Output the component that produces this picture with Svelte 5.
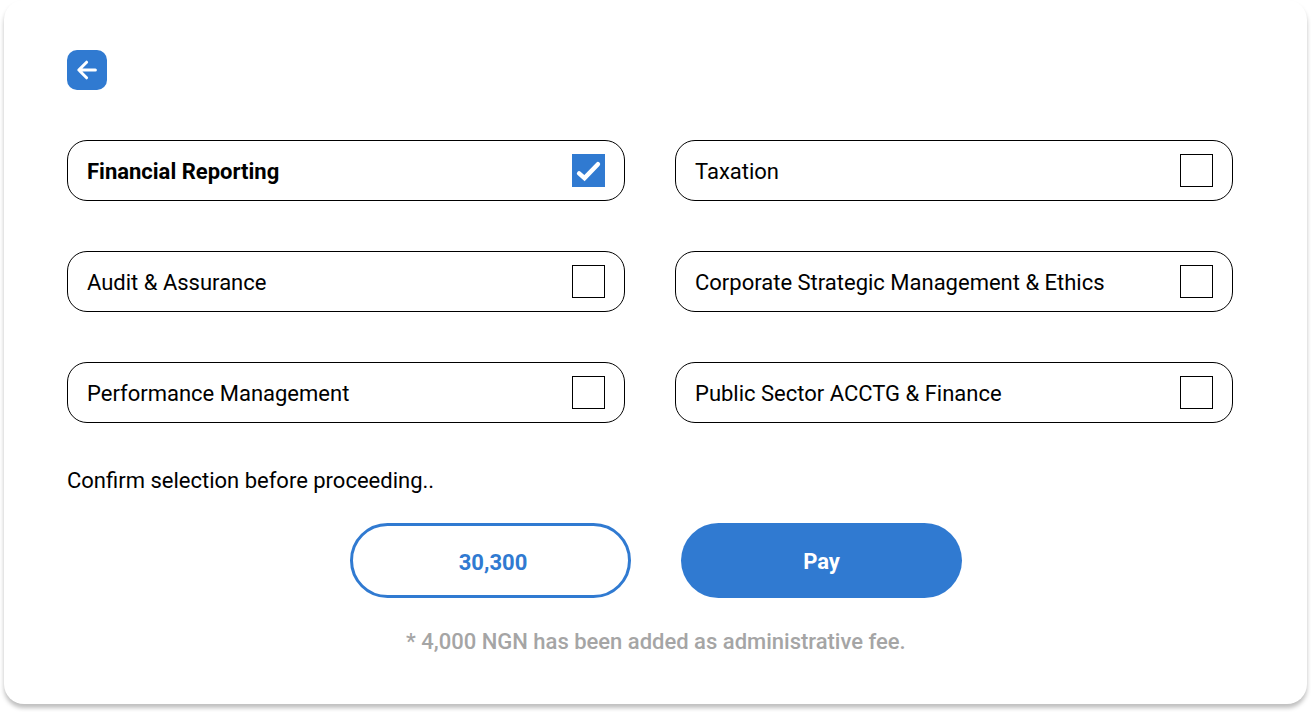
<script>
  const subjects = [
    { name: 'Financial Reporting', checked: true },
    { name: 'Taxation', checked: false },
    { name: 'Audit & Assurance', checked: false },
    { name: 'Corporate Strategic Management & Ethics', checked: false },
    { name: 'Performance Management', checked: false },
    { name: 'Public Sector ACCTG & Finance', checked: false }
  ];
</script>

<main class="page">
  <section class="card">
    <button class="back" aria-label="Back">
      <svg width="40" height="40" viewBox="0 0 40 40" fill="none" stroke="#fff" stroke-width="3" stroke-linecap="round" stroke-linejoin="round">
        <path d="M28.4 20H12M19.6 12.2L11.8 20L19.6 27.8" />
      </svg>
    </button>

    <div class="grid">
      {#each subjects as s}
        <div class="subject" class:selected={s.checked}>
          <span class="name">{s.name}</span>
          <span class="box">
            {#if s.checked}
              <svg width="33" height="33" viewBox="0 0 33 33" fill="none" stroke="#fff" stroke-width="4.5" stroke-linecap="round">
                <path d="M7.1 19.4L12.5 24.1L25.9 10.2" />
              </svg>
            {/if}
          </span>
        </div>
      {/each}
    </div>

    <p class="confirm">Confirm selection before proceeding..</p>
    <div class="actions">
      <div class="amount">30,300</div>
      <button class="pay">Pay</button>
    </div>
    <p class="fee">* 4,000 NGN has been added as administrative fee.</p>
  </section>
</main>

<style>
  :global(body) { margin: 0; background: #fff; }
  .page {
    box-sizing: border-box;
    height: 712px;
    padding: 0 4px;
    overflow: hidden;
  }
  .card {
    box-sizing: border-box;
    height: 704px;
    padding: 50px 74px 0 63px;
    border-radius: 20px;
    background: #fff;
    box-shadow: 0 4px 4px rgba(0, 0, 0, 0.25);
    font-family: Roboto, sans-serif;
    font-size: 22px;
    line-height: 26px;
    color: #000;
  }
  button { border: 0; padding: 0; font: inherit; }
  .back {
    display: block;
    width: 40px;
    height: 40px;
    border-radius: 10px;
    background: #307ad1;
  }
  .back svg { display: block; }
  .grid {
    display: grid;
    grid-template-columns: 558px 558px;
    gap: 50px;
    margin-top: 50px;
  }
  .subject {
    box-sizing: border-box;
    height: 61px;
    padding: 0 19px;
    border: 1px solid #000;
    border-radius: 20px;
    display: flex;
    align-items: center;
    justify-content: space-between;
  }
  .name { padding-top: 2px; }
  .selected { font-weight: 700; }
  .box {
    box-sizing: border-box;
    width: 33px;
    height: 33px;
    border: 1px solid #000;
  }
  .selected .box { border: 0; background: #307ad1; }
  .box svg { display: block; }
  p { margin: 0; }
  .confirm { margin-top: 45px; }
  .actions {
    display: flex;
    gap: 50px;
    margin: 29px 0 0 283px;
  }
  .amount, .pay {
    box-sizing: border-box;
    width: 281px;
    height: 75px;
    border-radius: 38px;
    display: flex;
    align-items: center;
    justify-content: center;
    font-weight: 700;
  }
  .amount { border: 3px solid #307ad1; color: #307ad1; padding: 4px 0 0 5px; }
  .pay { background: #307ad1; color: #fff; padding-top: 2px; }
  .fee { margin: 31px 0 0 339px; font-weight: 500; color: #a5a5a5; }
</style>
